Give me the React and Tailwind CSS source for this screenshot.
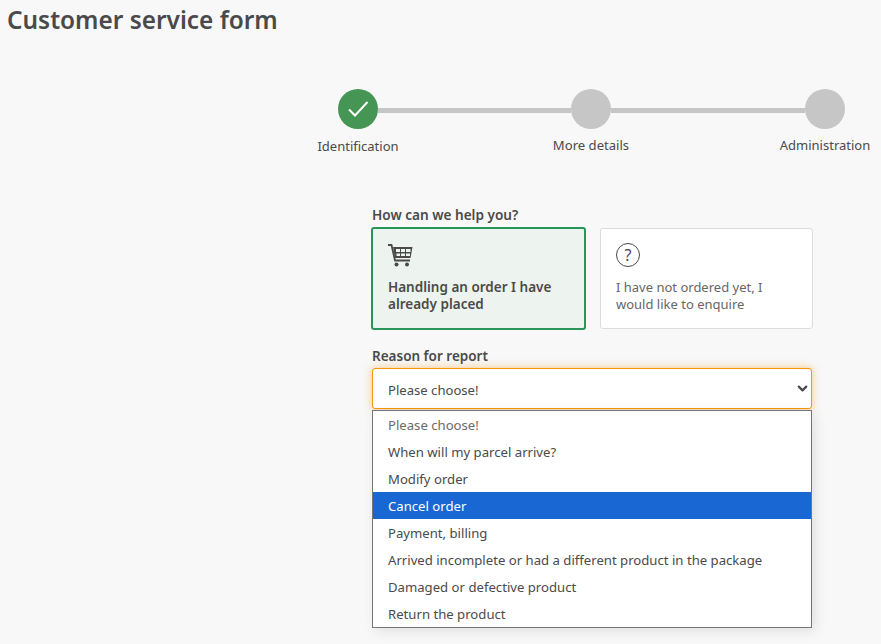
import { ChevronDown } from 'lucide-react'

const OPTIONS = [
  'Please choose!',
  'When will my parcel arrive?',
  'Modify order',
  'Cancel order',
  'Payment, billing',
  'Arrived incomplete or had a different product in the package',
  'Damaged or defective product',
  'Return the product',
]

function Cart() {
  return (
    <svg width="25" height="23" viewBox="0 0 25 23" fill="none" className="block">
      <path d="M0 1h3.5l3.5 15.5h15" stroke="#4a4a4a" strokeWidth="1.8" />
      <path d="M5 3h19.5l-2 11H7z" fill="#4a4a4a" />
      <path d="M8 5h4v3H8zM13 5h4v3h-4zM18 5h4.5v3H18zM8.5 9.5H12V12H8.5zM13 9.5h4V12h-4zM18 9.5h4V12h-4z" fill="#edf3ef" />
      <circle cx="8.5" cy="20.5" r="2" fill="#4a4a4a" />
      <circle cx="19" cy="20.5" r="2" fill="#4a4a4a" />
    </svg>
  )
}

function Step({ done }) {
  return (
    <div className={`w-10 h-10 rounded-full flex items-center justify-center ${done ? 'bg-[#459554]' : 'bg-[#c6c6c6]'}`}>
      {done && (
        <svg width="22" height="18" viewBox="0 0 22 18" fill="none">
          <path d="M2 9.5l6 6L20.5 2" stroke="#fff" strokeWidth="2" />
        </svg>
      )}
    </div>
  )
}

export default function App() {
  return (
    <div className="w-[881px] h-[644px] overflow-hidden bg-[#f8f8f8] text-[#4a4a4a] font-['Noto_Sans',sans-serif]">
      <h1 className="pl-[7px] pt-[4px] text-[24.4px] leading-[32px] font-semibold">Customer service form</h1>

      {/* Stepper */}
      <div className="ml-[338px] mt-[53px] w-[507px] grid grid-cols-[40px_193px_40px_194px_40px] items-center">
        <Step done />
        <div className="h-[5px] bg-[#c6c6c6] mt-[3px]" />
        <Step />
        <div className="h-[5px] bg-[#c6c6c6] mt-[3px]" />
        <Step />
        <div className="col-start-1 flex justify-center mt-[7px] text-[13px] leading-[20px] whitespace-nowrap">Identification</div>
        <div className="col-start-3 flex justify-center mt-[5px] text-[13.1px] leading-[20px] whitespace-nowrap">More details</div>
        <div className="col-start-5 flex justify-center mt-[5px] text-[13px] leading-[20px] whitespace-nowrap">Administration</div>
      </div>

      {/* Form */}
      <div className="ml-[372px] mt-[49px] w-[441px]">
        <div className="text-[13.6px] leading-[20px] font-semibold">How can we help you?</div>
        <div className="mt-[2px] flex items-center justify-between">
          <div className="w-[215px] h-[103px] -ml-px rounded-[3px] border-2 border-[#28965a] bg-[#edf3ef] pl-[15px] pt-[15px]">
            <Cart />
            <div className="mt-[12px] text-[13.5px] leading-[17px] font-semibold">
              Handling an order I have<br />already placed
            </div>
          </div>
          <div className="w-[213px] h-[101px] rounded-[3px] border border-[#dcdcdc] bg-white pl-[15px] pt-[14px] text-[#666]">
            <div className="w-6 h-6 rounded-full border border-[#4a4a4a] flex items-center justify-center text-[16px] leading-none text-[#4a4a4a]">?</div>
            <div className="mt-[12px] text-[13px] leading-[17px]">
              I have not ordered yet, I<br />would like to enquire
            </div>
          </div>
        </div>

        <div className="mt-[16px] text-[13.5px] leading-[20px] font-semibold">Reason for report</div>
        <div className="relative mt-[2px] w-[440px]">
          <div className="h-[41px] rounded-[3px] border border-[#f7960c] bg-white shadow-[0_0_8px_rgba(247,150,12,0.5)] pl-[15px] pr-[1px] flex items-center justify-between text-[13.1px]">
            <span className="pt-[4px]">Please choose!</span>
            <ChevronDown size={15} strokeWidth={3.5} className="text-[#4a4a4a]" />
          </div>
          <ul className="absolute left-0 top-[42px] w-full border border-[#767676] bg-white shadow-[3px_3px_12px_rgba(0,0,0,0.1)] text-[13.15px]">
            {OPTIONS.map((o, i) => (
              <li
                key={o}
                className={`h-[27px] pl-[15px] pt-[2px] flex items-center whitespace-nowrap ${o === 'Cancel order' ? 'bg-[#1967d2] text-white' : ''} ${i === 0 ? 'text-[#6b6b6b]' : ''}`}
              >
                {o}
              </li>
            ))}
          </ul>
        </div>
      </div>
    </div>
  )
}
